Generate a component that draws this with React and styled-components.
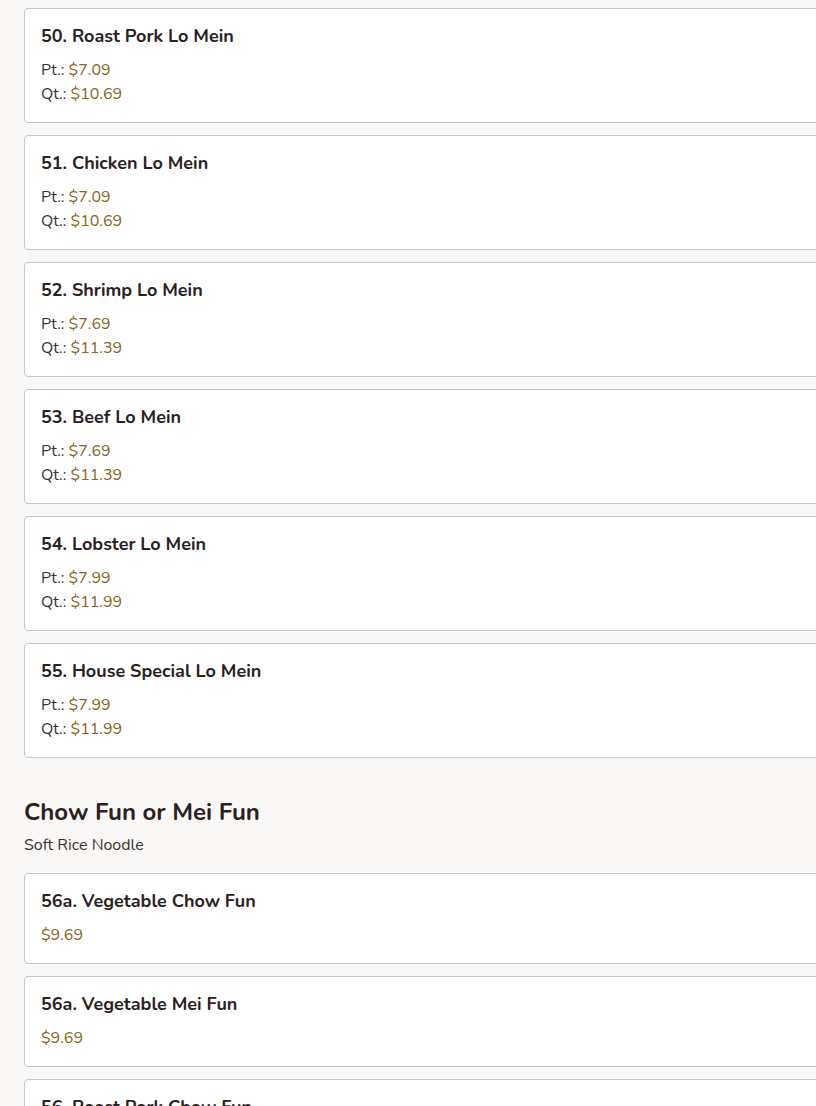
import React from 'react';
import styled, { createGlobalStyle } from 'styled-components';

const GlobalStyle = createGlobalStyle`
  html, body {
    margin: 0;
    padding: 0;
    background-color: #f9f8f6;
    overflow: hidden;
  }
  body {
    font-family: "Nunito", "Open Sans", "Liberation Sans", sans-serif;
    color: #2b211e;
  }
`;

const Page = styled.main`
  padding: 8px 0 0 24px;
  width: 840px;
`;

const Section = styled.section`
  display: flex;
  flex-direction: column;
  gap: 12px;
  margin-bottom: 38px;
`;

const SectionHeader = styled.header`
  margin-bottom: 4px;
`;

const SectionTitle = styled.h2`
  margin: 0;
  font-size: 24px;
  line-height: 32px;
  font-weight: 700;
  color: #2b211e;
`;

const SectionNote = styled.p`
  margin: 5px 0 0;
  font-size: 16px;
  line-height: 24px;
  color: #3a3330;
`;

const Card = styled.article`
  background: #fff;
  border: 1px solid #c9c7c4;
  border-radius: 4px;
  padding: 15px 16px 16px;
`;

const ItemName = styled.h3`
  margin: 0 0 10px;
  font-size: 18px;
  line-height: 24px;
  font-weight: 700;
  color: #2b211e;
`;

const PriceLine = styled.div`
  font-size: 16px;
  line-height: 24px;
  color: #3a3330;
`;

const Price = styled.span`
  color: #876420;
`;

const loMein = [
  { name: '50. Roast Pork Lo Mein', pt: '$7.09', qt: '$10.69' },
  { name: '51. Chicken Lo Mein', pt: '$7.09', qt: '$10.69' },
  { name: '52. Shrimp Lo Mein', pt: '$7.69', qt: '$11.39' },
  { name: '53. Beef Lo Mein', pt: '$7.69', qt: '$11.39' },
  { name: '54. Lobster Lo Mein', pt: '$7.99', qt: '$11.99' },
  { name: '55. House Special Lo Mein', pt: '$7.99', qt: '$11.99' },
];

const chowFun = [
  { name: '56a. Vegetable Chow Fun', price: '$9.69' },
  { name: '56a. Vegetable Mei Fun', price: '$9.69' },
  { name: '56. Roast Pork Chow Fun', price: '$9.99' },
];

function MenuItem({ item }) {
  return (
    <Card>
      <ItemName>{item.name}</ItemName>
      {item.price ? (
        <PriceLine><Price>{item.price}</Price></PriceLine>
      ) : (
        <>
          <PriceLine>Pt.: <Price>{item.pt}</Price></PriceLine>
          <PriceLine>Qt.: <Price>{item.qt}</Price></PriceLine>
        </>
      )}
    </Card>
  );
}

export default function App() {
  return (
    <Page>
      <GlobalStyle />
      <Section>
        {loMein.map((item) => (
          <MenuItem key={item.name} item={item} />
        ))}
      </Section>
      <Section>
        <SectionHeader>
          <SectionTitle>Chow Fun or Mei Fun</SectionTitle>
          <SectionNote>Soft Rice Noodle</SectionNote>
        </SectionHeader>
        {chowFun.map((item) => (
          <MenuItem key={item.name} item={item} />
        ))}
      </Section>
    </Page>
  );
}
